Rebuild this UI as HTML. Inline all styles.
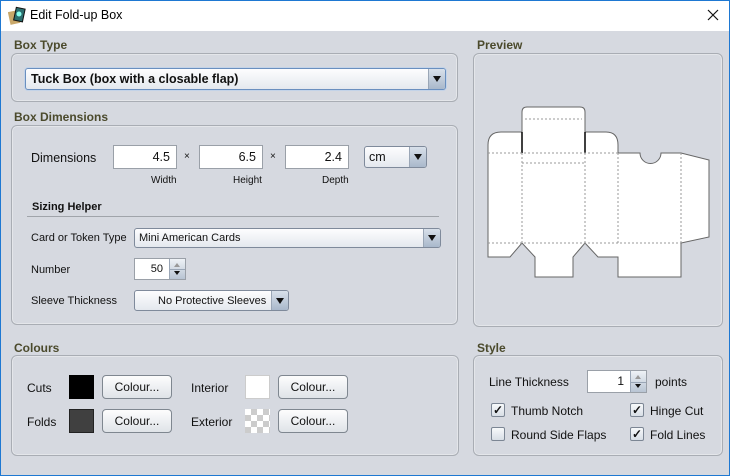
<!DOCTYPE html>
<html><head><meta charset="utf-8"><style>
*{box-sizing:border-box;margin:0;padding:0}
body{width:730px;height:476px;overflow:hidden;font-family:"Liberation Sans",Arial,sans-serif;font-size:12px;color:#111;background:#d6d9e0;position:relative}
.a{position:absolute}
#tb{left:0;top:0;width:730px;height:31px;background:#fff;border:1px solid #1e78d2;border-bottom:none}
#frame{left:0;top:31px;width:730px;height:445px;border:1px solid #1e78d2;border-top:none}
.lbl{font-weight:bold;color:#4b4a2c;font-size:12px}
.pan{border:1px solid #a9adb4;border-radius:6px;background:#d6d9e0;box-shadow:inset 0 0 0 1px #e4e6ea}
.cb{border:1px solid #7f8a9b;border-radius:3px;background:linear-gradient(#fdfdfe,#e4e8ee);}
.arr{position:absolute;right:0;top:0;bottom:0;width:17px;border-left:1px solid #9aa6b6;background:linear-gradient(#d8e0ea,#a9b8cb);border-radius:0 2px 2px 0}
.arr:after{content:"";position:absolute;left:4px;top:50%;margin-top:-3px;border-left:4px solid transparent;border-right:4px solid transparent;border-top:6px solid #111}
.fld{background:#fff;border:1px solid #9aa0a8;text-align:right;padding-right:6px}
.btn{border:1px solid #7f8790;border-radius:4px;background:linear-gradient(#fdfdfd,#dfe3e8);text-align:center;line-height:22px}
.chk{width:14px;height:14px;border:1px solid #7c8694;border-radius:2px;background:linear-gradient(#f7f9fb,#d8dee6);font-size:12px;line-height:12px;text-align:center;font-weight:bold}
.sp{position:absolute;right:0;top:0;bottom:0;width:16px;border-left:1px solid #9aa6b6;background:linear-gradient(#eef2f6,#b8c4d3)}
.sp:before{content:"";position:absolute;left:4px;top:4px;border-left:3px solid transparent;border-right:3px solid transparent;border-bottom:4px solid #999}
.sp:after{content:"";position:absolute;left:4px;bottom:4px;border-left:3px solid transparent;border-right:3px solid transparent;border-top:4px solid #111}
.sp i{position:absolute;left:0;right:0;top:50%;height:1px;background:#9aa6b6}
</style></head><body>
<div id="tb" class="a"></div>
<div id="frame" class="a"></div>
<svg class="a" style="left:8px;top:6px" width="20" height="20"><rect x="1" y="5" width="10" height="13" fill="#c9a86a" transform="rotate(-12 6 11)"/><rect x="7" y="2" width="9" height="13" fill="#2c6e6e" stroke="#111" transform="rotate(12 11 8)"/><circle cx="11" cy="8" r="2.5" fill="#8fe"/></svg>
<div class="a" style="left:30px;top:8px;font-size:12.5px;color:#000">Edit Fold-up Box</div>
<svg class="a" style="left:707px;top:9px" width="12" height="12"><path d="M1 1L11 11M11 1L1 11" stroke="#111" stroke-width="1.2"/></svg>

<div class="a lbl" style="left:14px;top:38px">Box Type</div>
<div class="a pan" style="left:11px;top:53px;width:447px;height:49px"></div>
<div class="a cb" style="left:25px;top:68px;width:421px;height:22px;border-color:#6a8fbf;box-shadow:0 0 0 1px #c3d3e8"><span style="position:absolute;left:5px;top:3px;font-weight:bold;font-size:12.5px">Tuck Box (box with a closable flap)</span><div class="arr"></div></div>

<div class="a lbl" style="left:14px;top:110px">Box Dimensions</div>
<div class="a pan" style="left:11px;top:125px;width:447px;height:200px"></div>
<div class="a" style="left:31px;top:151px;font-size:12.5px">Dimensions</div>
<div class="a fld" style="left:113px;top:145px;width:64px;height:24px;line-height:22px;font-size:12.5px">4.5</div>
<div class="a" style="left:184px;top:151px;font-size:10px">×</div>
<div class="a fld" style="left:199px;top:145px;width:64px;height:24px;line-height:22px;font-size:12.5px">6.5</div>
<div class="a" style="left:270px;top:151px;font-size:10px">×</div>
<div class="a fld" style="left:285px;top:145px;width:64px;height:24px;line-height:22px;font-size:12.5px">2.4</div>
<div class="a cb" style="left:364px;top:146px;width:63px;height:22px"><span style="position:absolute;left:4px;top:3px;font-size:12.5px">cm</span><div class="arr"></div></div>
<div class="a" style="left:151px;top:175px;font-size:10px">Width</div>
<div class="a" style="left:233px;top:175px;font-size:10px">Height</div>
<div class="a" style="left:322px;top:175px;font-size:10px">Depth</div>
<div class="a" style="left:32px;top:201px;font-weight:bold;font-size:11px">Sizing Helper</div>
<div class="a" style="left:27px;top:216px;width:412px;height:1px;background:#a0a4aa"></div>
<div class="a" style="left:31px;top:232px;font-size:11px">Card or Token Type</div>
<div class="a cb" style="left:134px;top:228px;width:307px;height:20px"><span style="position:absolute;left:4px;top:3px;font-size:11px">Mini American Cards</span><div class="arr"></div></div>
<div class="a" style="left:31px;top:264px;font-size:11px">Number</div>
<div class="a fld" style="left:134px;top:258px;width:52px;height:22px;line-height:20px;font-size:11px;padding-right:22px">50<div class="sp"><i></i></div></div>
<div class="a" style="left:31px;top:295px;font-size:11px">Sleeve Thickness</div>
<div class="a cb" style="left:134px;top:290px;width:155px;height:21px"><span style="position:absolute;left:23px;top:4px;font-size:11px">No Protective Sleeves</span><div class="arr"></div></div>

<div class="a lbl" style="left:477px;top:38px">Preview</div>
<div class="a pan" style="left:473px;top:53px;width:250px;height:274px"></div>
<svg class="a" style="left:0;top:0" width="730" height="476">
<path d="M488 257L488 145Q488 132 501 132L522 132L522 112Q522 107 527 107L580 107Q585 107 585 112L585 132L606 132Q618 132 618 145L618 153L640 153A10.5 10.5 0 0 0 661 153L681 153L709 160L709 237L681 243L681 277L618 277L618 257L598 257L585 243L573 257L573 277L535 277L535 257L522 243L510 257Z" fill="#fff" stroke="#666" stroke-width="1"/>
<path d="M522 132L522 153M585 132L585 153" stroke="#000" stroke-width="1.5"/>
<g stroke="#999" stroke-dasharray="2,2" stroke-width="1" fill="none">
<path d="M488 153H618M522 163H585M525 119H582M488 243H681M522 153V243M585 153V243M618 153V243M681 153V243"/>
</g>
</svg>

<div class="a lbl" style="left:14px;top:341px">Colours</div>
<div class="a pan" style="left:11px;top:355px;width:448px;height:101px"></div>
<div class="a" style="left:27px;top:381px;font-size:12px">Cuts</div>
<div class="a" style="left:69px;top:375px;width:25px;height:24px;background:#000"></div>
<div class="a btn" style="left:102px;top:375px;width:70px;height:24px">Colour...</div>
<div class="a" style="left:191px;top:381px">Interior</div>
<div class="a" style="left:245px;top:375px;width:25px;height:24px;background:#fff;border:1px solid #ccc"></div>
<div class="a btn" style="left:278px;top:375px;width:70px;height:24px">Colour...</div>
<div class="a" style="left:27px;top:415px">Folds</div>
<div class="a" style="left:69px;top:409px;width:25px;height:24px;background:#404040;border:1px solid #222"></div>
<div class="a btn" style="left:102px;top:409px;width:70px;height:24px">Colour...</div>
<div class="a" style="left:191px;top:415px">Exterior</div>
<div class="a" style="left:245px;top:409px;width:25px;height:24px;background-color:#fff;background-image:linear-gradient(45deg,#ccc 25%,transparent 25%,transparent 75%,#ccc 75%),linear-gradient(45deg,#ccc 25%,transparent 25%,transparent 75%,#ccc 75%);background-size:12px 12px;background-position:0 0,6px 6px"></div>
<div class="a btn" style="left:278px;top:409px;width:70px;height:24px">Colour...</div>

<div class="a lbl" style="left:477px;top:341px">Style</div>
<div class="a pan" style="left:473px;top:355px;width:250px;height:101px"></div>
<div class="a" style="left:489px;top:375px">Line Thickness</div>
<div class="a fld" style="left:587px;top:370px;width:60px;height:23px;line-height:21px;padding-right:22px">1<div class="sp"><i></i></div></div>
<div class="a" style="left:655px;top:375px">points</div>
<div class="a chk" style="left:491px;top:403px">✓</div><div class="a" style="left:511px;top:404px">Thumb Notch</div>
<div class="a chk" style="left:630px;top:403px">✓</div><div class="a" style="left:650px;top:404px">Hinge Cut</div>
<div class="a chk" style="left:491px;top:427px"></div><div class="a" style="left:511px;top:428px">Round Side Flaps</div>
<div class="a chk" style="left:630px;top:427px">✓</div><div class="a" style="left:650px;top:428px">Fold Lines</div>
</body></html>
